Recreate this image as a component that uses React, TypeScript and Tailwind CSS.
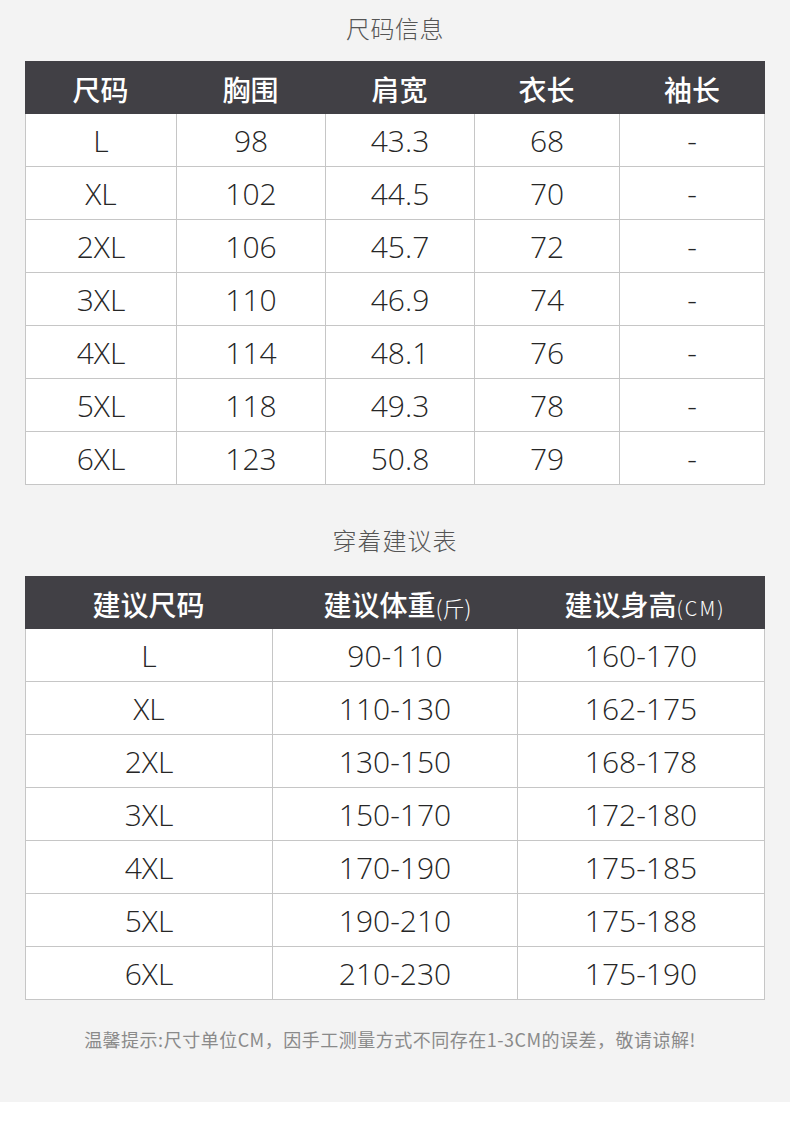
import React from "react";

const sizeRows = [
  ["L", "98", "43.3", "68", "-"],
  ["XL", "102", "44.5", "70", "-"],
  ["2XL", "106", "45.7", "72", "-"],
  ["3XL", "110", "46.9", "74", "-"],
  ["4XL", "114", "48.1", "76", "-"],
  ["5XL", "118", "49.3", "78", "-"],
  ["6XL", "123", "50.8", "79", "-"],
];

const adviceRows = [
  ["L", "90-110", "160-170"],
  ["XL", "110-130", "162-175"],
  ["2XL", "130-150", "168-178"],
  ["3XL", "150-170", "172-180"],
  ["4XL", "170-190", "175-185"],
  ["5XL", "190-210", "175-188"],
  ["6XL", "210-230", "175-190"],
];

const cjk = "font-['Noto_Sans_CJK_SC',sans-serif]";
const num = "font-['Open_Sans','Noto_Sans_CJK_SC',sans-serif] font-light";

export default function App() {
  return (
    <div className="w-[790px]">
      <div className="bg-[#f3f3f3] px-[25px] pb-[51px]">
        {/* 尺码信息 */}
        <div
          className={`h-[54px] pt-[1px] flex items-center justify-center text-[24px] tracking-[0.5px] text-[#555] ${cjk} font-light`}
        >
          尺码信息
        </div>
        <div className="mt-[7px]">
          <div
            className={`grid grid-cols-[151px_149px_149px_145px_1fr] h-[53px] bg-[#414045] text-white text-[28px] ${cjk} font-medium`}
          >
            {["尺码", "胸围", "肩宽", "衣长", "袖长"].map((h) => (
              <div key={h} className="flex items-center justify-center pt-[2px]">
                {h}
              </div>
            ))}
          </div>
          <div className="border-l border-[#c6c6c6]">
            {sizeRows.map((row, i) => (
              <div
                key={i}
                className="grid grid-cols-[151px_149px_149px_145px_1fr] h-[53px] bg-white border-b border-[#c6c6c6]"
              >
                {row.map((c, j) => (
                  <div
                    key={j}
                    className={`flex items-center justify-center pt-[1px] border-r border-[#c6c6c6] text-[30px] text-[#262626] ${num}`}
                  >
                    {c}
                  </div>
                ))}
              </div>
            ))}
          </div>
        </div>

        {/* 穿着建议表 */}
        <div
          className={`h-[91px] pt-[42px] leading-[26px] text-center text-[24px] tracking-[1px] text-[#555] ${cjk} font-light`}
        >
          穿着建议表
        </div>
        <div>
          <div
            className={`grid grid-cols-[247px_245px_1fr] h-[53px] bg-[#414045] text-white text-[28px] ${cjk} font-medium`}
          >
            <div className="flex items-center justify-center pt-[2px]">建议尺码</div>
            <div className="flex items-center justify-center pt-[2px] pl-[6px]">
              建议体重
              <span className="text-[22px] font-light mt-[8px]">(斤)</span>
            </div>
            <div className="flex items-center justify-center pt-[2px] pl-[8px]">
              建议身高
              <span className="text-[20px] font-light tracking-[2px] mt-[8px]">(CM)</span>
            </div>
          </div>
          <div className="border-l border-[#c6c6c6]">
            {adviceRows.map((row, i) => (
              <div
                key={i}
                className="grid grid-cols-[247px_245px_1fr] h-[53px] bg-white border-b border-[#c6c6c6]"
              >
                {row.map((c, j) => (
                  <div
                    key={j}
                    className={`flex items-center justify-center pt-[1px] border-r border-[#c6c6c6] text-[30px] text-[#262626] ${num}`}
                  >
                    {c}
                  </div>
                ))}
              </div>
            ))}
          </div>
        </div>

        <div
          className={`mt-[27px] pr-[10px] text-center text-[18px] tracking-[0.5px] leading-[24px] text-[#8a8a8a] ${cjk}`}
        >
          温馨提示:尺寸单位CM，因手工测量方式不同存在1-3CM的误差，敬请谅解!
        </div>
      </div>
      <div className="h-[27px] bg-white" />
    </div>
  );
}
